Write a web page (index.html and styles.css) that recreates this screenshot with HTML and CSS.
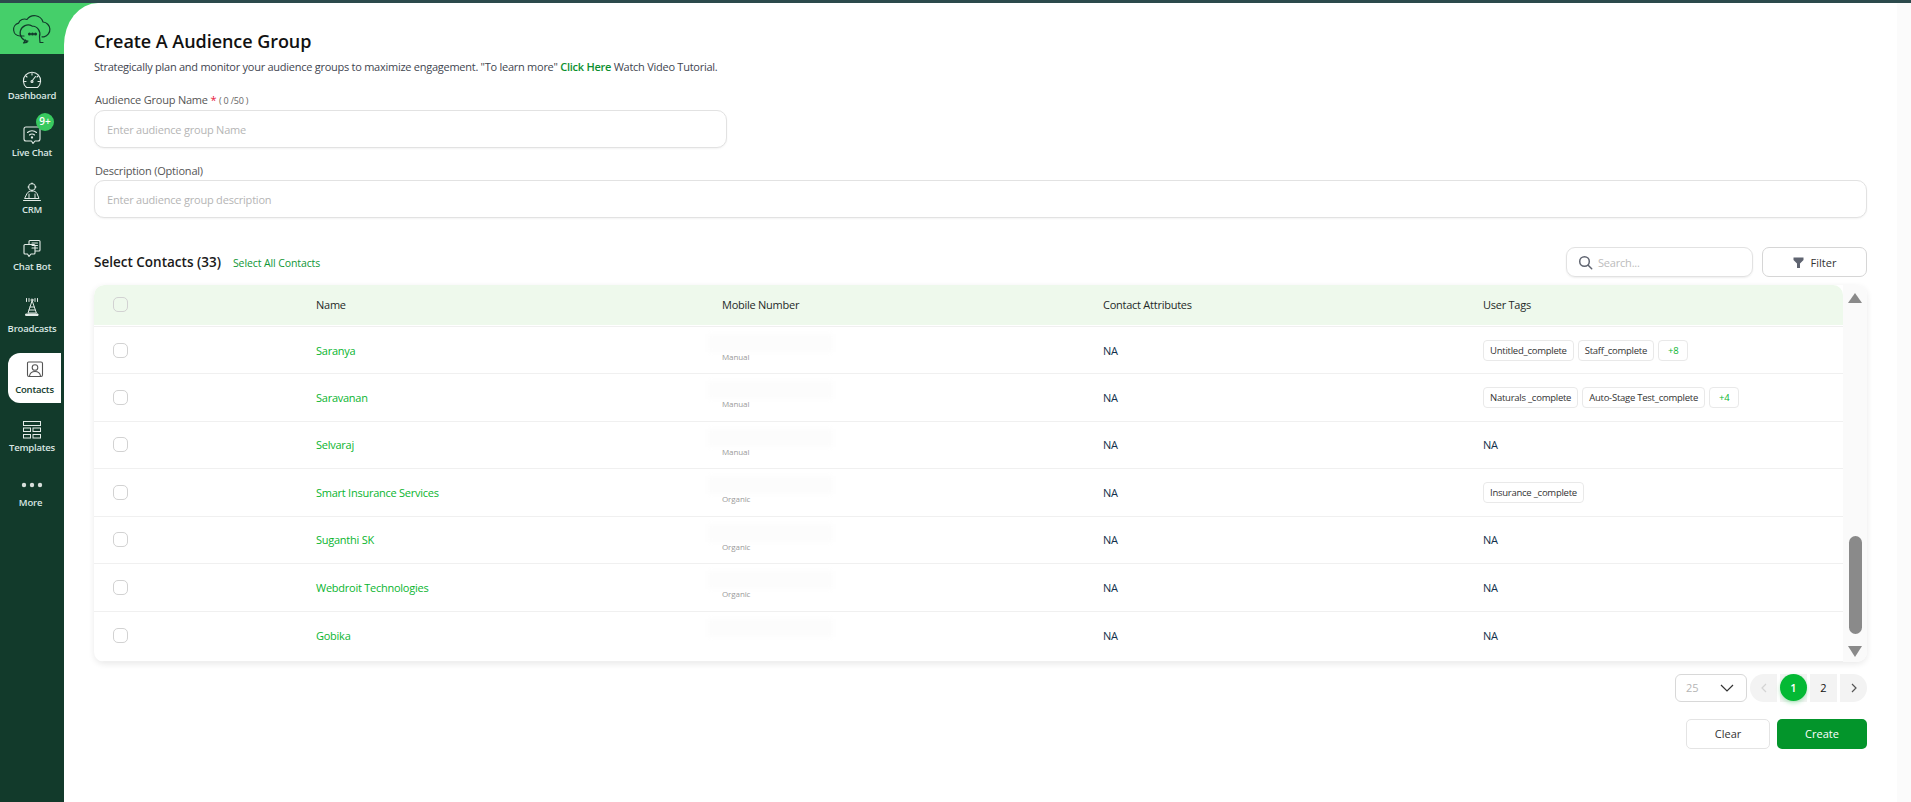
FILE: index.html
```html
<!DOCTYPE html>
<html lang="en">
<head>
<meta charset="utf-8">
<title>Create A Audience Group</title>
<link rel="stylesheet" href="styles.css">
</head>
<body>
<div class="app">
  <aside class="sidebar">
    <div class="logo">
      <svg width="40" height="34" viewBox="0 0 40 34" fill="none" stroke="#123a2b" stroke-width="1.2" stroke-linecap="round" stroke-linejoin="round">
        <path d="M12 23H8a6.500 6.500 0 0 1-1.500-12.800A6.500 6.500 0 0 1 15 6.500 9 9 0 0 1 31 9a7.500 7.500 0 0 1 1 14.800h-2"/>
        <path d="M20 13a8 8 0 0 1 7.500 10.500l.5 6h3M13 29.500l3-1.500a8 8 0 1 1 4-15"/>
        <path d="M15 29.500l-3.500 .5 2-3"/>
        <circle cx="17.500" cy="21" r=".9" fill="#123a2b"/><circle cx="20.500" cy="21" r=".9" fill="#123a2b"/><circle cx="23.500" cy="21" r=".9" fill="#123a2b"/>
      </svg>
    </div>
    <nav class="nav">
      <a class="nav-item nav-first">
        <span class="nav-icon nav-icon-short"><svg width="20" height="20" viewBox="0 0 20 20" fill="none" stroke="#e3ebe7" stroke-width="1.100" stroke-linecap="round"><path d="M4.500 17.500a8.600 8.600 0 1 1 11 0z"/><path d="M10 11l3.500-4.500M10 3.500v1.500M4 6l1 1M16 6l-1 1M2.500 11.500h1.500M16 11.500h1.500"/><circle cx="10" cy="11.500" r="1"/></svg></span>
        <span class="nav-label">Dashboard</span>
      </a>
      <a class="nav-item">
        <span class="nav-icon"><svg width="20" height="20" viewBox="0 0 20 20" fill="none" stroke="#e3ebe7" stroke-width="1.100" stroke-linecap="round" stroke-linejoin="round"><path d="M4 2h12a2 2 0 0 1 2 2v10a2 2 0 0 1-2 2h-3l-2 2.500-1.500-2.500H4a2 2 0 0 1-2-2V4a2 2 0 0 1 2-2z"/><path d="M5.500 7.500a6.500 6.500 0 0 1 9 0M7.500 10a3.500 3.500 0 0 1 5 0"/><circle cx="10" cy="12.500" r=".6"/></svg></span>
        <span class="badge">9+</span>
        <span class="nav-label">Live Chat</span>
      </a>
      <a class="nav-item">
        <span class="nav-icon"><svg width="20" height="20" viewBox="0 0 20 20" fill="none" stroke="#e3ebe7" stroke-width="1" stroke-linecap="round" stroke-linejoin="round"><circle cx="10" cy="5" r="3.500"/><path d="M10 1v1M10 8v1M6 5h1M13 5h1"/><path d="M5 11.500c1-2 3-2.500 5-2.500s4 .5 5 2.500l2 5H3z"/><path d="M1.500 18.500h17M7 12v4M13 12v4"/></svg></span>
        <span class="nav-label">CRM</span>
      </a>
      <a class="nav-item">
        <span class="nav-icon"><svg width="20" height="20" viewBox="0 0 20 20" fill="none" stroke="#e3ebe7" stroke-width="1.100" stroke-linecap="round" stroke-linejoin="round"><path d="M7 5V2.500A1 1 0 0 1 8 1.500h9a1 1 0 0 1 1 1V11a1 1 0 0 1-1 1h-3.500"/><path d="M3 5.500h9a1 1 0 0 1 1 1V14a1 1 0 0 1-1 1H9l-2 2.500L5.500 15H3a1 1 0 0 1-1-1V6.500a1 1 0 0 1 1-1z"/><path d="M10 4h5.500M10 6.500h5.500M10 9h5.500"/></svg></span>
        <span class="nav-label">Chat Bot</span>
      </a>
      <a class="nav-item nav-62 nav-tower">
        <span class="nav-icon"><svg width="20" height="20" viewBox="0 0 20 20" fill="none" stroke="#e3ebe7" stroke-width="1" stroke-linecap="round" stroke-linejoin="round"><circle cx="10" cy="3" r="1"/><path d="M7 1.500v3M13 1.500v3M4.500 1.500v3M15.500 1.500v3"/><path d="M10 4l-4 12h8zM8 10h4M7 13h6"/><path d="M4 17h12v1.500H4z" fill="#e3ebe7"/></svg></span>
        <span class="nav-label">Broadcasts</span>
      </a>
      <a class="nav-item nav-active">
        <span class="nav-icon"><svg width="18" height="18" viewBox="0 0 18 18" fill="none" stroke="#555" stroke-width="1.100" stroke-linecap="round" stroke-linejoin="round"><path d="M2.500 2h12.500a1.500 1.500 0 0 1 1.500 1.500v11.500a1.500 1.500 0 0 1-1.500 1.500H3a1.500 1.500 0 0 1-1.500-1.500V3A1 1 0 0 1 2.500 2z"/><circle cx="9" cy="7.500" r="2.800"/><path d="M3.500 16c.5-3 2.500-4.500 5.500-4.500s5 1.500 5.500 4.500"/></svg></span>
        <span class="nav-label">Contacts</span>
      </a>
      <a class="nav-item nav-52">
        <span class="nav-icon"><svg width="20" height="20" viewBox="0 0 20 20" fill="none" stroke="#e3ebe7" stroke-width="1"><rect x="1.500" y="1.500" width="17" height="4"/><rect x="1.500" y="8" width="7" height="3.500"/><rect x="11" y="8" width="7.500" height="3.500"/><rect x="1.500" y="14.500" width="7" height="3.500"/><rect x="11" y="14.500" width="7.500" height="3.500"/></svg></span>
        <span class="nav-label">Templates</span>
      </a>
      <a class="nav-item nav-55">
        <span class="nav-icon"><svg width="22" height="6" viewBox="0 0 22 6" fill="#d8dedb"><circle cx="3" cy="3" r="2.200"/><circle cx="11" cy="3" r="2.200"/><circle cx="19" cy="3" r="2.200"/></svg></span>
        <span class="nav-label nav-label-more">More</span>
      </a>
    </nav>
  </aside>
  <main class="main">
    <div class="content">
      <h1 class="title">Create A Audience Group</h1>
      <p class="subtitle">Strategically plan and monitor your audience groups to maximize engagement. "To learn more" <a class="link-strong">Click Here</a> Watch Video Tutorial.</p>

      <label class="field-label">Audience Group Name <span class="req">*</span> <span class="count">( 0 /50 )</span></label>
      <input class="input input-name" type="text" placeholder="Enter audience group Name">

      <label class="field-label field-label-desc">Description (Optional)</label>
      <input class="input" type="text" placeholder="Enter audience group description">

      <div class="toolbar">
        <div class="toolbar-left">
          <h2 class="section-title">Select Contacts (33)</h2>
          <a class="select-all">Select All Contacts</a>
        </div>
        <div class="search">
          <svg width="15" height="15" viewBox="0 0 15 15" fill="none" stroke="#5f6470" stroke-width="1.500" stroke-linecap="round"><circle cx="6.500" cy="6.500" r="4.800"/><path d="M10.200 10.200l3.500 3.500"/></svg>
          <span>Search...</span>
        </div>
        <button class="filter">
          <svg width="11" height="11" viewBox="0 0 11 11" fill="#5f6470"><path d="M.5 .5h10v2.500L7 6.500V11H4V6.500L.5 3z"/></svg>
          Filter
        </button>
      </div>

      <div class="table-card">
        <div class="table">
          <div class="row row-head">
            <span class="check"></span><span>Name</span><span>Mobile Number</span><span>Contact Attributes</span><span>User Tags</span>
          </div>
          <div class="row row-first">
            <span class="check"></span><span class="name">Saranya</span>
            <span class="mobile"><span class="blur"></span><span class="source">Manual</span></span>
            <span class="na">NA</span>
            <span class="tags"><span class="tag">Untitled_complete</span><span class="tag">Staff_complete</span><span class="tag tag-more">+8</span></span>
          </div>
          <div class="row">
            <span class="check"></span><span class="name">Saravanan</span>
            <span class="mobile"><span class="blur"></span><span class="source">Manual</span></span>
            <span class="na">NA</span>
            <span class="tags"><span class="tag">Naturals _complete</span><span class="tag">Auto-Stage Test_complete</span><span class="tag tag-more">+4</span></span>
          </div>
          <div class="row">
            <span class="check"></span><span class="name">Selvaraj</span>
            <span class="mobile"><span class="blur"></span><span class="source">Manual</span></span>
            <span class="na">NA</span><span class="na">NA</span>
          </div>
          <div class="row">
            <span class="check"></span><span class="name">Smart Insurance Services</span>
            <span class="mobile"><span class="blur"></span><span class="source">Organic</span></span>
            <span class="na">NA</span>
            <span class="tags"><span class="tag">Insurance _complete</span></span>
          </div>
          <div class="row">
            <span class="check"></span><span class="name">Suganthi SK</span>
            <span class="mobile"><span class="blur"></span><span class="source">Organic</span></span>
            <span class="na">NA</span><span class="na">NA</span>
          </div>
          <div class="row">
            <span class="check"></span><span class="name">Webdroit Technologies</span>
            <span class="mobile"><span class="blur"></span><span class="source">Organic</span></span>
            <span class="na">NA</span><span class="na">NA</span>
          </div>
          <div class="row row-last">
            <span class="check"></span><span class="name">Gobika</span>
            <span class="mobile"><span class="blur"></span></span>
            <span class="na">NA</span><span class="na">NA</span>
          </div>
        </div>
        <div class="scrollbar">
          <span class="arrow-up"></span>
          <span class="thumb"></span>
          <span class="arrow-down"></span>
        </div>
      </div>

      <div class="pager-row">
        <div class="page-size">
          <span>25</span>
          <svg width="14" height="8" viewBox="0 0 14 8" fill="none" stroke="#333" stroke-width="1.200"><path d="M1 1l6 6 6-6"/></svg>
        </div>
        <div class="pager">
          <span class="page page-prev"><svg width="6" height="10" viewBox="0 0 6 10" fill="none" stroke="#d4d4d4" stroke-width="1.200"><path d="M5 1L1 5l4 4"/></svg></span>
          <span class="page page-cur"><span class="page-dot">1</span></span>
          <span class="page">2</span>
          <span class="page page-next"><svg width="6" height="10" viewBox="0 0 6 10" fill="none" stroke="#555" stroke-width="1.200"><path d="M1 1l4 4-4 4"/></svg></span>
        </div>
      </div>

      <div class="actions">
        <button class="btn btn-clear">Clear</button>
        <button class="btn btn-create">Create</button>
      </div>
    </div>
    <div class="gutter"></div>
  </main>
</div>
</body>
</html>
```

FILE: styles.css
```css
* { box-sizing: border-box; }
html, body { margin: 0; height: 100%; overflow: hidden; }
body { font-family: "Open Sans", "Noto Sans", sans-serif; color: #111; background: #fff; }

.app {
  display: flex;
  height: 802px;
  border-top: 3px solid #2c4a4c;
  background: #45cf6a;
}

/* Sidebar */
.sidebar { width: 64px; flex: none; background: #123a2b; display: flex; flex-direction: column; }
.logo { height: 51px; background: #45cf6a; display: flex; align-items: center; justify-content: center; padding-top: 2px; }
.nav { display: flex; flex-direction: column; }
.nav-item {
  position: relative;
  height: 57px;
  display: flex;
  flex-direction: column;
  align-items: center;
  justify-content: flex-end;
  color: #d9e6e2;
}
.nav-first { height: 49px; }
.nav-62 { height: 62px; }
.nav-52 { height: 52px; }
.nav-55 { height: 55px; }
.nav-icon { height: 22px; display: flex; align-items: center; justify-content: center; }
.nav-icon-short { margin-bottom: -2px; }
.nav-tower .nav-icon { margin-bottom: 4px; }
.nav-label { font-size: 9.500px; line-height: 14px; font-weight: 600; letter-spacing: -.2px; white-space: nowrap; }
.nav-label-more { margin-right: 3px; }
.nav-active {
  height: 50px;
  width: 53px;
  margin: 17px 0 0 8px;
  padding: 5px 0 6px;
  justify-content: flex-start;
  background: #fff;
  color: #123a2b;
  border-radius: 12px 0 0 12px;
}
.nav-active .nav-icon { margin-bottom: 3px; }
.badge {
  position: absolute;
  top: 10px;
  left: 36px;
  width: 18px;
  height: 18px;
  border-radius: 50%;
  background: #38c95f;
  color: #fff;
  font-size: 10px;
  font-weight: 600;
  line-height: 17px;
  text-align: center;
}

/* Main */
.main {
  flex: 1;
  min-width: 0;
  background: #fff;
  border-radius: 34px 0 0 0 / 42px 0 0 0;
  display: flex;
}
.content { flex: 1; min-width: 0; padding: 26px 30px 0 30px; }
.gutter { width: 14px; flex: none; background: #fbfbfb; }

.title { margin: 0; font-size: 18px; line-height: 25px; font-weight: 600; letter-spacing: -.05px; color: #111; }
.subtitle { margin: 5px 0 0; font-size: 11px; line-height: 16px; letter-spacing: -.26px; color: #3f4650; }
.link-strong { color: #0b8f2e; font-weight: 600; }

.field-label { display: block; margin: 17px 0 0 1px; font-size: 11px; line-height: 16px; letter-spacing: -.2px; color: #555; }
.field-label-desc { margin-top: 15px; }
.req { color: #e8173c; }
.count { font-size: 9px; color: #666; }
.input {
  display: block;
  width: 100%;
  height: 38px;
  margin-top: 1px;
  padding: 0 12px;
  border: 1px solid #e2e2e2;
  border-radius: 10px;
  box-shadow: 0 1px 2px rgba(0,0,0,.05);
  font: 11px "Open Sans", sans-serif;
  letter-spacing: -.2px;
  outline: none;
}
.input::placeholder { color: #b5b5b5; }
.input-name { width: 633px; }

.toolbar { display: flex; align-items: center; margin-top: 29px; height: 30px; }
.toolbar-left { flex: 1; display: flex; align-items: center; gap: 12px; }
.section-title { margin: 0; font-size: 13.500px; line-height: 20px; font-weight: 600; color: #1a1a1a; }
.select-all { font-size: 10.500px; font-weight: 400; letter-spacing: -.1px; color: #0f9636; padding-top: 1px; }
.search {
  width: 187px;
  height: 30px;
  display: flex;
  align-items: center;
  gap: 5px;
  padding-left: 11px;
  border: 1px solid #e2e2e2;
  border-radius: 9px;
  box-shadow: 0 1px 2px rgba(0,0,0,.07);
  font-size: 11px;
  letter-spacing: -.2px;
  color: #bcbcbc;
}
.filter {
  width: 105px;
  height: 30px;
  margin-left: 9px;
  display: flex;
  align-items: center;
  justify-content: center;
  gap: 7px;
  background: #fff;
  border: 1px solid #d6d6d6;
  border-radius: 7px;
  font: 11px "Open Sans", sans-serif;
  color: #333;
}

/* Table */
.table-card {
  margin-top: 8px;
  display: flex;
  border-radius: 10px;
  box-shadow: 0 2px 6px rgba(0,0,0,.09);
  overflow: hidden;
}
.table { flex: 1; min-width: 0; }
.row {
  display: grid;
  grid-template-columns: 203px 406px 381px 380px 1fr;
  align-items: center;
  height: 47.500px;
  padding-left: 19px;
  border-bottom: 1px solid #f0f0f0;
  font-size: 11px;
  letter-spacing: -.25px;
  color: #1e2a28;
}
.row-head { height: 40px; padding-bottom: 1px; background: #eef9ec; border-bottom: 0; margin-bottom: 1px; border-radius: 10px 10px 0 0; }
.row-first { border-top: 1px solid #f0f0f0; height: 48px; }
.row-last { height: 50px; border-bottom: 1px solid #f0f0f0; padding-bottom: 2px; }
.check { width: 15px; height: 15px; border: 1px solid #d2d2d2; border-radius: 5px; background: transparent; }
.name { color: #0ab52f; }
.na { color: #12304a; }
.mobile { position: relative; display: block; height: 30px; }
.blur {
  position: absolute;
  left: -14px;
  top: -1px;
  width: 125px;
  height: 18px;
  background: #fcfcfc;
  filter: blur(2px);
}
.source { position: absolute; left: 0; top: 16px; font-size: 8px; line-height: 11px; letter-spacing: -.1px; color: #9a9a9a; }
.tags { display: flex; gap: 4px; }
.tag {
  height: 21px;
  padding: 0 6px;
  border: 1px solid #e9e9e9;
  border-radius: 4px;
  font-size: 9.500px;
  line-height: 19px;
  letter-spacing: -.25px;
  color: #333;
  white-space: nowrap;
}
.tag-more { padding: 0 9px; color: #0ab52f; }

.scrollbar {
  width: 24px;
  flex: none;
  background: #fafafa;
  display: flex;
  flex-direction: column;
  align-items: center;
  padding: 8px 0 5px;
}
.arrow-up { width: 0; height: 0; border: 7.500px solid transparent; border-top: 0; border-bottom: 10px solid #8a8a8a; }
.thumb { width: 13px; height: 98px; margin-top: auto; margin-bottom: 12px; border-radius: 7px; background: #8a8a8a; }
.arrow-down { width: 0; height: 0; border: 7.500px solid transparent; border-bottom: 0; border-top: 11px solid #8a8a8a; }

/* Pager */
.pager-row { display: flex; justify-content: flex-end; gap: 3px; margin-top: 12px; }
.page-size {
  width: 72px;
  height: 28px;
  display: flex;
  align-items: center;
  gap: 21px;
  padding-left: 10px;
  border: 1px solid #d8d8d8;
  border-radius: 6px;
  font-size: 11px;
  color: #b5b5b5;
}
.pager { display: flex; gap: 3px; height: 28px; }
.page {
  width: 27px;
  display: flex;
  align-items: center;
  justify-content: center;
  background: #f3f3f3;
  font-size: 11px;
  color: #111;
}
.page-prev { border-radius: 14px 0 0 14px; }
.page-next { border-radius: 0 14px 14px 0; }
.page-dot {
  width: 27px;
  height: 27px;
  border-radius: 50%;
  background: #04b934;
  color: #fff;
  font-weight: 600;
  display: flex;
  align-items: center;
  justify-content: center;
  box-shadow: 0 2px 4px rgba(4,185,52,.3);
}

.actions { display: flex; justify-content: flex-end; gap: 7px; margin-top: 17px; }
.btn { height: 30px; border-radius: 5px; font: 11px "Open Sans", sans-serif; }
.btn-clear { width: 84px; background: #fff; border: 1px solid #e4e4e4; color: #333; }
.btn-create { width: 90px; background: #03952b; border: 0; color: #fff; }
```
